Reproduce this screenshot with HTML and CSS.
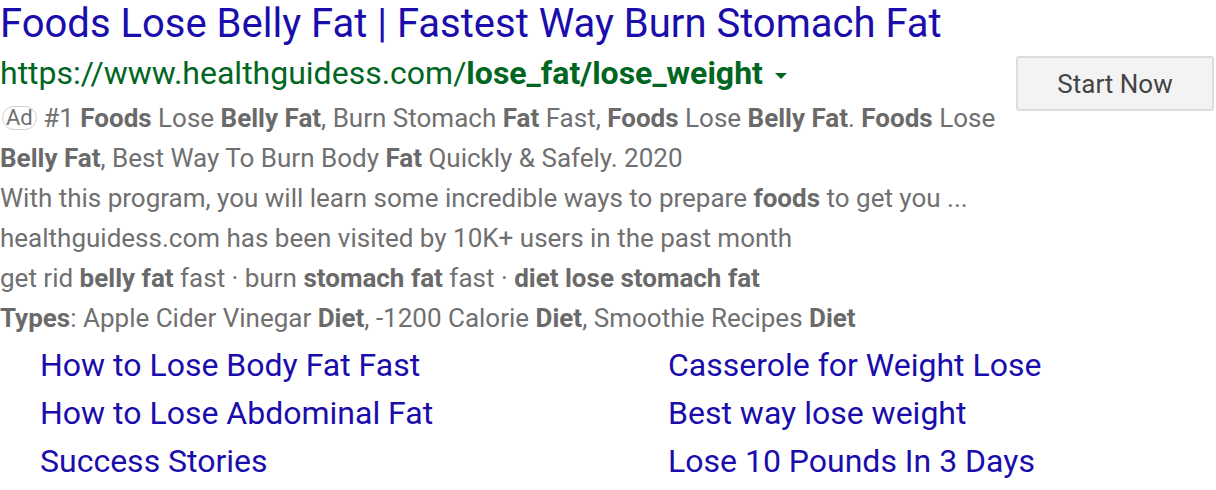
FILE: index.html
```html
<!DOCTYPE html>
<html>
<head>
<meta charset="utf-8">
<link rel="stylesheet" href="styles.css">
</head>
<body>
<div class="ad">
  <div class="main">
    <h1 class="title">Foods Lose Belly Fat | Fastest Way Burn Stomach Fat</h1>
    <div class="url">https://www.healthguidess.com/<b>lose_fat/lose_weight</b><span class="caret"></span></div>
    <p class="desc"><span class="badge">Ad</span> #1 <b>Foods</b> Lose <b>Belly Fat</b>, Burn Stomach <b>Fat</b> Fast, <b>Foods</b> Lose <b>Belly Fat</b>. <b>Foods</b> Lose <b>Belly Fat</b>, Best Way To Burn Body <b>Fat</b> Quickly &amp; Safely. 2020</p>
    <p class="line">With this program, you will learn some incredible ways to prepare <b>foods</b> to get you ...</p>
    <p class="line">healthguidess.com has been visited by 10K+ users in the past month</p>
    <p class="line">get rid <b>belly fat</b> fast · burn <b>stomach fat</b> fast · <b>diet lose stomach fat</b></p>
    <p class="line"><b>Types</b>: Apple Cider Vinegar <b>Diet</b>, -1200 Calorie <b>Diet</b>, Smoothie Recipes <b>Diet</b></p>
  </div>
  <div class="side">
    <button class="cta">Start Now</button>
  </div>
</div>
<div class="sitelinks">
  <a href="#">How to Lose Body Fat Fast</a>
  <a href="#">Casserole for Weight Lose</a>
  <a href="#">How to Lose Abdominal Fat</a>
  <a href="#">Best way lose weight</a>
  <a href="#">Success Stories</a>
  <a href="#">Lose 10 Pounds In 3 Days</a>
</div>
</body>
</html>
```
FILE: styles.css
```css
* { box-sizing: border-box; }
body {
  margin: 0;
  background: #fff;
  font-family: Roboto, "Liberation Sans", sans-serif;
}
.ad {
  display: flex;
  align-items: flex-start;
}
.main {
  flex: 1;
}
.title {
  margin: 0;
  font-size: 40px;
  font-weight: 400;
  line-height: 48px;
  color: #1a0dab;
}
.url {
  font-size: 32px;
  line-height: 50px;
  color: #006621;
}
.url b { font-weight: 700; }
.caret {
  display: inline-block;
  width: 0;
  height: 0;
  margin-left: 12px;
  vertical-align: middle;
  border-left: 6px solid transparent;
  border-right: 6px solid transparent;
  border-top: 6px solid #006621;
}
.desc, .line {
  margin: 0;
  font-size: 26px;
  line-height: 40px;
  color: #707070;
  max-width: 1000px;
}
.desc b, .line b { color: #6a6a6a; font-weight: 700; }
.badge {
  display: inline-block;
  font-size: 22px;
  line-height: 22px;
  padding: 0 3px;
  border: 1px solid #d0d0d0;
  border-radius: 12px;
  color: #707070;
  vertical-align: 2px;
  margin-left: 2px;
}
.side {
  padding-top: 56px;
  padding-right: 2px;
}
.cta {
  width: 198px;
  height: 55px;
  background: #f3f3f3;
  border: 2px solid #dcdcdc;
  border-radius: 3px;
  font-family: Roboto, "Liberation Sans", sans-serif;
  font-size: 26px;
  color: #444;
}
.sitelinks {
  display: grid;
  grid-template-columns: 628px auto;
  padding-left: 40px;
  padding-top: 3px;
}
.sitelinks a {
  font-size: 32px;
  line-height: 48px;
  color: #1a0dab;
  text-decoration: none;
}
```
